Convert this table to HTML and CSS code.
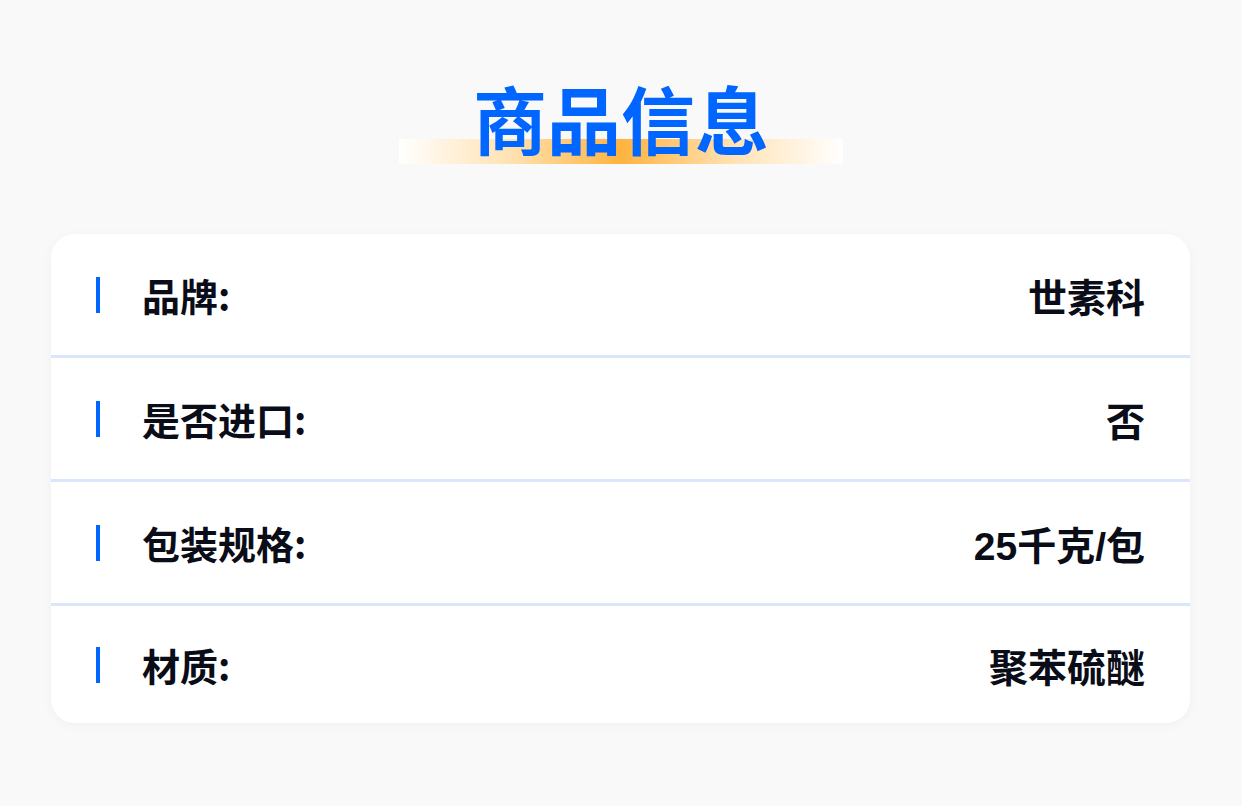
FILE: index.html
```html
<!DOCTYPE html>
<html lang="zh">
<head>
<meta charset="utf-8">
<title>商品信息</title>
<link rel="stylesheet" href="styles.css">
</head>
<body>
<div class="page">
  <header class="heading">
    <div class="heading-bar"></div>
    <h1 class="heading-title">商品信息</h1>
  </header>
  <section class="card">
    <div class="row">
      <span class="mark"></span>
      <span class="label">品牌:</span>
      <span class="value">世素科</span>
    </div>
    <div class="row">
      <span class="mark"></span>
      <span class="label">是否进口:</span>
      <span class="value">否</span>
    </div>
    <div class="row">
      <span class="mark"></span>
      <span class="label">包装规格:</span>
      <span class="value">25千克/包</span>
    </div>
    <div class="row row-last">
      <span class="mark"></span>
      <span class="label">材质:</span>
      <span class="value">聚苯硫醚</span>
    </div>
  </section>
</div>
</body>
</html>
```

FILE: styles.css
```css
html, body {
  margin: 0;
  padding: 0;
  background: #f9f9f9;
}
body {
  font-family: "Noto Sans CJK SC", "Noto Sans", sans-serif;
  color: #0a0d17;
}
.page {
  width: 1242px;
  height: 806px;
  padding-top: 80px;
  box-sizing: border-box;
}
.heading {
  width: 444px;
  margin: 0 auto;
  display: grid;
  height: 84px;
}
.heading-bar {
  grid-area: 1 / 1;
  align-self: end;
  height: 25px;
  background: linear-gradient(90deg, #ffffff 0%, #ffe2b3 25%, #ffb33f 50%, #ffe2b3 75%, #ffffff 100%);
}
.heading-title {
  grid-area: 1 / 1;
  margin: -5px 0 0;
  text-align: center;
  font-size: 74px;
  line-height: 84px;
  font-weight: 700;
  color: #0066ff;
  align-self: start;
}
.card {
  margin: 70px 52px 0 51px;
  background: #ffffff;
  border-radius: 24px;
  box-shadow: 0 2px 12px rgba(0, 0, 0, 0.04);
  overflow: hidden;
}
.row {
  display: flex;
  align-items: center;
  height: 121px;
  padding: 0 45px;
  border-bottom: 3px solid #dae6fc;
}
.row-last {
  height: 117px;
  border-bottom: none;
}
.mark {
  width: 4px;
  height: 36px;
  background: #0066ff;
  flex: none;
}
.label {
  margin-left: 42px;
  font-size: 38px;
  font-weight: 700;
  flex: 1;
}
.value {
  font-family: "Liberation Sans", "Noto Sans CJK SC", sans-serif;
  font-size: 39px;
  font-weight: 700;
}
```
